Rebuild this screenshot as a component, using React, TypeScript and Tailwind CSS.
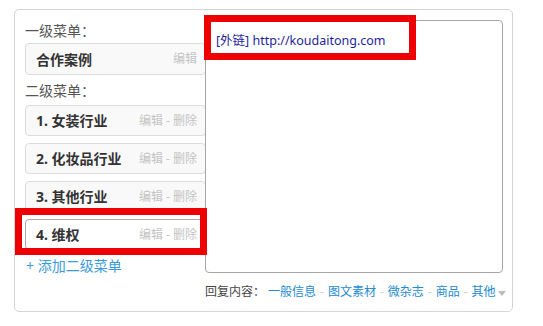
import React from 'react';

const subMenus = ['1. 女装行业', '2. 化妆品行业', '3. 其他行业', '4. 维权'];
const replyTypes = ['一般信息', '图文素材', '微杂志', '商品', '其他'];

const MenuItem: React.FC<{ label: string; canDelete?: boolean; active?: boolean }> = ({ label, canDelete = true, active }) => (
  <div
    className={`flex items-center justify-between h-[31px] pl-[10px] pr-[8px] rounded-[4px] border ${
      active ? 'bg-white border-[#a8a8a8]' : 'bg-[#f9f9f9] border-[#dcdcdc]'
    }`}
  >
    <span className="text-[14px] font-bold text-[#333]">{label}</span>
    <span className="text-[12px] text-[#c4c4c4]">
      编辑{canDelete && <> - 删除</>}
    </span>
  </div>
);

export default function App() {
  return (
    <div className="w-[543px] h-[326px] bg-white pt-[9px] pl-[14px] font-['Noto_Sans','Noto_Sans_CJK_SC',sans-serif]">
      <div className="relative w-[499px] h-[303px] border border-[#d4d4d4] rounded-[5px]">
        <div className="flex pt-[10px] pl-[10px]">
          {/* left: menu tree */}
          <div className="w-[181px] flex flex-col">
            <div className="h-[22px] leading-[22px] text-[14px] text-[#555]">一级菜单：</div>
            <div className="mt-px h-[32px]">
              <div className="flex items-center justify-between h-[32px] pl-[10px] pr-[8px] rounded-[4px] border border-[#dcdcdc] bg-[#f9f9f9]">
                <span className="text-[14px] font-bold text-[#333]">合作案例</span>
                <span className="text-[12px] text-[#c4c4c4]">编辑</span>
              </div>
            </div>
            <div className="mt-[5px] h-[22px] leading-[22px] text-[14px] text-[#555]">二级菜单：</div>
            <div className="mt-[3px] flex flex-col gap-[7px]">
              {subMenus.map((m, i) => (
                <MenuItem key={m} label={m} active={i === subMenus.length - 1} />
              ))}
            </div>
            <div className="mt-[5px] h-[22px] leading-[22px] pl-px text-[14px] text-[#3a9bd8]">+ 添加二级菜单</div>
          </div>

          {/* right: reply content */}
          <div className="-ml-px relative z-10 flex flex-col">
            <div className="w-[298px] h-[253px] bg-white border border-[#a6a6a6] rounded-[4px] pt-[10px] pl-[10px]">
              <div className="leading-[20px] text-[12.5px] text-[#1f1f9c]">[外链] http://koudaitong.com</div>
            </div>
            <div className="mt-[9px] h-[20px] flex items-center text-[12px]">
              <span className="text-[#444] mr-[3px]">回复内容：</span>
              {replyTypes.map((t, i) => (
                <React.Fragment key={t}>
                  {i > 0 && <span className="mx-[4px] text-[#ccc]">-</span>}
                  <span className="text-[#1d8ad0]">{t}</span>
                </React.Fragment>
              ))}
              <svg width="8" height="5" viewBox="0 0 8 5" className="ml-[2px] mt-[2px]">
                <path d="M0 0h8L4 5z" fill="#bbb" />
              </svg>
            </div>
          </div>
        </div>

        {/* annotation boxes */}
        <div className="absolute left-0 top-[198px] w-[192px] h-[47px] border-[7px] border-[#ee0000] pointer-events-none z-20" />
        <div className="absolute left-[189px] top-[5px] w-[212px] h-[45px] border-[7px] border-[#ee0000] pointer-events-none z-20" />
      </div>
    </div>
  );
}
